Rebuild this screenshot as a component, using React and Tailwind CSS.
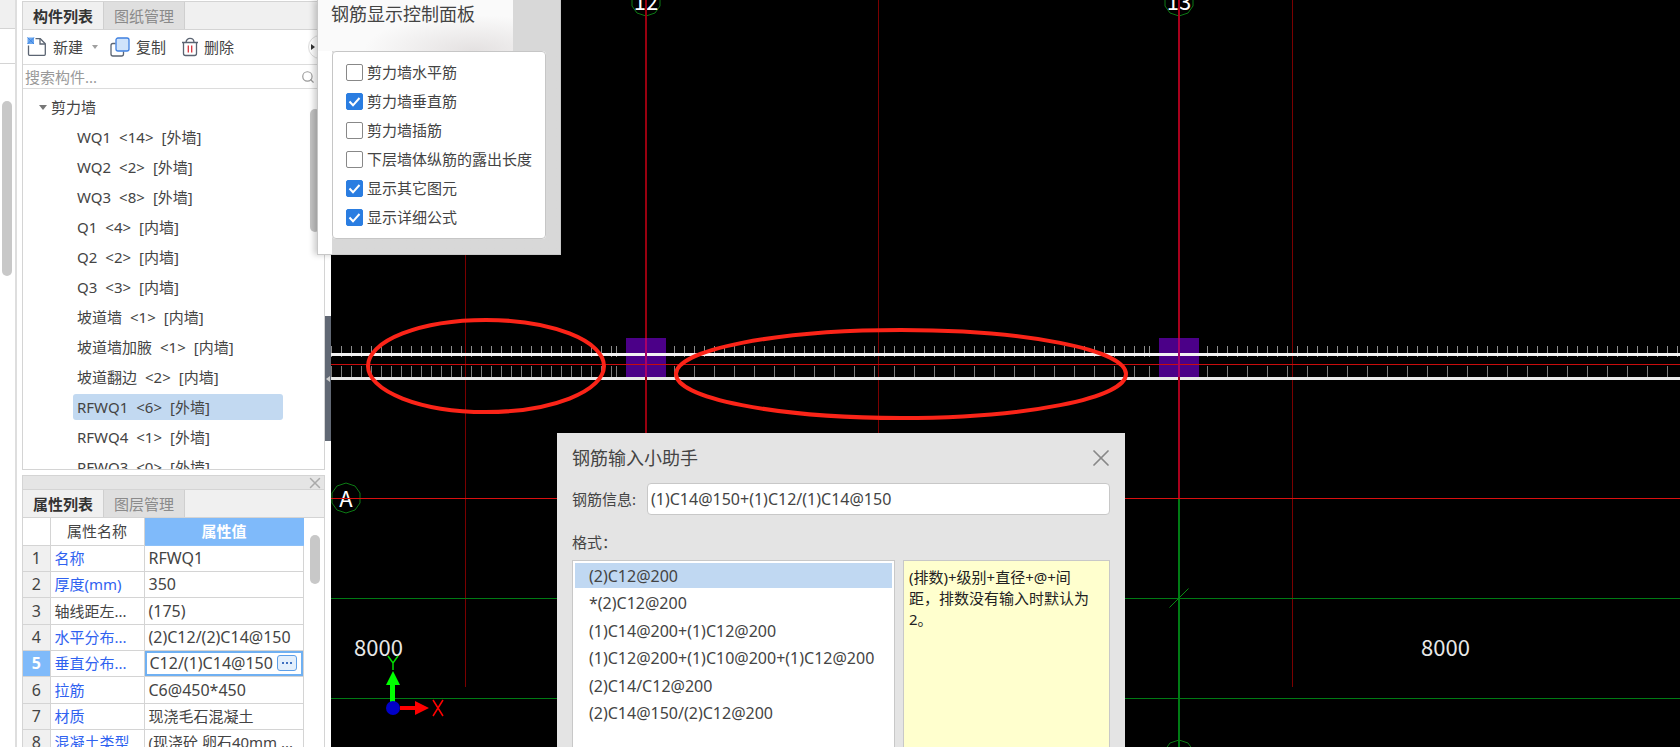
import React, { useState } from 'react';
import { Search, X } from 'lucide-react';

const components = [
  { name: 'WQ1', count: 14, kind: '外墙' },
  { name: 'WQ2', count: 2, kind: '外墙' },
  { name: 'WQ3', count: 8, kind: '外墙' },
  { name: 'Q1', count: 4, kind: '内墙' },
  { name: 'Q2', count: 2, kind: '内墙' },
  { name: 'Q3', count: 3, kind: '内墙' },
  { name: '坡道墙', count: 1, kind: '内墙' },
  { name: '坡道墙加腋', count: 1, kind: '内墙' },
  { name: '坡道翻边', count: 2, kind: '内墙' },
  { name: 'RFWQ1', count: 6, kind: '外墙' },
  { name: 'RFWQ4', count: 1, kind: '外墙' },
  { name: 'RFWQ3', count: 0, kind: '外墙' },
];

const properties = [
  { name: '名称', value: 'RFWQ1', blue: true },
  { name: '厚度(mm)', value: '350', blue: true },
  { name: '轴线距左...', value: '(175)' },
  { name: '水平分布...', value: '(2)C12/(2)C14@150', blue: true },
  { name: '垂直分布...', value: 'C12/(1)C14@150', blue: true, editing: true },
  { name: '拉筋', value: 'C6@450*450', blue: true },
  { name: '材质', value: '现浇毛石混凝土', blue: true, cjk: true },
  { name: '混凝土类型', value: '(现浇砼 卵石40mm ...', blue: true, cjk: true },
];

const displayOptions = [
  { label: '剪力墙水平筋', checked: false },
  { label: '剪力墙垂直筋', checked: true },
  { label: '剪力墙插筋', checked: false },
  { label: '下层墙体纵筋的露出长度', checked: false },
  { label: '显示其它图元', checked: true },
  { label: '显示详细公式', checked: true },
];

const formats = [
  '(2)C12@200',
  '*(2)C12@200',
  '(1)C14@200+(1)C12@200',
  '(1)C12@200+(1)C10@200+(1)C12@200',
  '(2)C14/C12@200',
  '(2)C14@150/(2)C12@200',
];

const range = (start, end, step) => {
  const out = [];
  for (let v = start; v <= end; v += step) out.push(v);
  return out;
};

// rebar marks, in drawing coordinates
const outerBars = [...range(1, 281, 10), 286, ...range(344, 814, 10), 819, ...range(877, 1900, 10)];
const innerBars = [...range(1, 281, 10), 286, ...range(344, 804, 20), 819, ...range(877, 1900, 20)];

const Tabs = ({ active, other }) => (
  <div className="flex h-7 shrink-0 border-b border-[#d4d4d4] bg-[#f0f0f0]" role="tablist">
    <button role="tab" aria-selected="true" className="w-[80px] font-bold text-[#333]">{active}</button>
    <button role="tab" aria-selected="false" className="w-[82px] border-x border-[#cfcfcf] bg-[#dfdfdf] text-[#8a8a8a]">{other}</button>
  </div>
);

const NewIcon = () => (
  <svg width="20" height="20" viewBox="0 0 20 20" fill="none" stroke="#5b6472" strokeWidth="1.3">
    <path d="M8.5 1.7h4.8l5 5v10.6a1 1 0 0 1-1 1H2.5a1 1 0 0 1-1-1V8.5" />
    <path d="M13 2v5h5" />
    <rect x="0.5" y="0.5" width="6.500" height="6.500" fill="#6aa6ee" stroke="none" />
    <path d="M0.500 0.500l6.500 6.500M7 0.500l-6.500 6.500" stroke="#3f86e4" strokeWidth="1" />
  </svg>
);

const CopyIcon = () => (
  <svg width="20" height="20" viewBox="0 0 20 20" fill="none" strokeWidth="1.3">
    <path d="M5.5 6.5H3a2 2 0 0 0-2 2V17a2 2 0 0 0 2 2h8.5a2 2 0 0 0 2-2v-2.5" stroke="#5b6472" />
    <rect x="6" y="1" width="13" height="13" rx="2" fill="#cfe3fb" stroke="#3f80e0" />
  </svg>
);

const DeleteIcon = () => (
  <svg width="18" height="20" viewBox="0 0 18 20" fill="none" stroke="#5b6472" strokeWidth="1.3">
    <path d="M1 5.5h16M5 5.5c0-5.500 8-5.500 8 0M2.500 5.500v11a2 2 0 0 0 2 2h9a2 2 0 0 0 2-2v-11" />
    <path d="M7.300 8.500v7M10.700 8.500v7" stroke="#d8343c" />
  </svg>
);

const ComponentPanel = () => {
  const [selected, setSelected] = useState('RFWQ1');
  return (
    <section className="mt-px flex h-[469px] shrink-0 flex-col overflow-hidden border border-[#d4d4d4] bg-white">
      <Tabs active="构件列表" other="图纸管理" />
      <div className="flex h-[35px] shrink-0 items-center border-b border-[#dcdcdc] pl-1">
        <button className="flex items-center gap-[6px]"><NewIcon />新建</button>
        <span className="mx-[9px] border-x-3 border-t-4 border-x-transparent border-t-[#a0a0a0]" />
        <button className="ml-[3px] flex items-center gap-[6px]"><CopyIcon />复制</button>
        <button className="ml-[15px] flex items-center gap-[5px]"><DeleteIcon />删除</button>
        <button aria-label="更多" className="ml-auto flex h-6 w-4 items-center rounded-l-full border border-[#ddd] pl-[2px]">
          <span className="border-y-3 border-l-4 border-y-transparent border-l-[#333]" />
        </button>
      </div>
      <div className="flex h-6 shrink-0 items-center border-b border-[#dcdcdc] pl-[2px] pr-[9px]">
        <input aria-label="搜索构件" placeholder="搜索构件..." className="min-w-0 flex-1 outline-none placeholder:text-[#999]" />
        <Search className="size-[14px] text-[#999]" />
      </div>
      <div className="flex min-h-0 flex-1">
        <ul className="flex-1 pt-[3px]">
          <li className="flex h-[30px] items-center gap-1 pl-4">
            <span className="border-x-4 border-t-5 border-x-transparent border-t-[#777]" />剪力墙
          </li>
          {components.map((item) => (
            <li key={item.name} className="flex h-[30px] items-center pl-[50px]">
              <button
                onClick={() => setSelected(item.name)}
                className={`flex h-[26px] w-[210px] items-center gap-2 rounded-[3px] px-1 ${item.name === selected ? 'bg-[#c2d9f1]' : ''}`}
              >
                <span>{item.name}</span>
                <span>&lt;{item.count}&gt;</span>
                <span>[{item.kind}]</span>
              </button>
            </li>
          ))}
        </ul>
        <div className="mr-1 mt-5 h-[123px] w-[10px] rounded-full bg-[#c4c4c4]" />
      </div>
    </section>
  );
};

const PropertyPanel = () => (
  <section className="mt-[5px] flex min-h-0 flex-1 flex-col overflow-hidden border-x border-t border-[#d4d4d4] bg-white">
    <div className="flex h-[14px] shrink-0 items-center justify-end border-b border-[#d4d4d4] bg-[#e5e5e5]">
      <button aria-label="关闭属性面板"><X className="size-[18px] text-[#aaa]" /></button>
    </div>
    <Tabs active="属性列表" other="图层管理" />
    <div className="flex">
      <table className="w-[281px] table-fixed border-collapse">
        <thead>
          <tr className="h-[27px]">
            <th className="w-[27px] border-b border-r border-[#d4d4d4]"></th>
            <th className="w-[94px] border-b border-r border-[#d4d4d4] font-normal">属性名称</th>
            <th className="border-b border-[#8cc0f8] bg-[#7fbafa] text-white">属性值</th>
          </tr>
        </thead>
        <tbody>
          {properties.map((p, i) => (
            <tr key={p.name} className="h-[26px] [&:nth-child(3n)]:h-[27px]">
              <th className={`border-b border-r border-[#d4d4d4] text-[16px] ${p.editing ? 'bg-[#7fbafa] font-bold text-white' : 'bg-[#f0f0f0] font-normal'}`}>{i + 1}</th>
              <td className={`overflow-hidden whitespace-nowrap border-b border-r border-[#d4d4d4] pl-1 ${p.blue ? 'text-[#2f62f0]' : ''}`}>{p.name}</td>
              {p.editing ? (
                <td className="border-b border-r border-[#d4d4d4] text-[16px]">
                  <div className="flex h-[25px] items-center border-2 border-[#6fb0f2] pl-[3px] pr-1">
                    <input aria-label={p.name} defaultValue={p.value} className="min-w-0 flex-1 outline-none" />
                    <button aria-label="编辑" className="flex h-4 w-5 items-center justify-center gap-[2px] rounded-[3px] border border-[#5d9fe8] bg-[#e3effc]">
                      <i className="size-[2px] bg-[#3f70c0]" /><i className="size-[2px] bg-[#3f70c0]" /><i className="size-[2px] bg-[#3f70c0]" />
                    </button>
                  </div>
                </td>
              ) : (
                <td className={`overflow-hidden whitespace-nowrap border-b border-r border-[#d4d4d4] pl-1 ${p.cjk ? '' : 'text-[16px]'}`}>{p.value}</td>
              )}
            </tr>
          ))}
        </tbody>
      </table>
      <div className="ml-[6px] mt-[17px] h-[49px] w-[10px] rounded-full bg-[#c8c8c8]" />
    </div>
  </section>
);

const AxisBubble = ({ x, y, label }) => (
  <g>
    <path transform={`translate(${x} ${y})`} d="M0-15L9-12 14-5 14 5 9 12 0 15-9 12-14 5-14-5-9-12Z" fill="none" stroke="#0c7a14" />
    <text x={x} y={y + 9} textAnchor="middle" className="fill-white text-[22px]">{label}</text>
  </g>
);

const Drawing = () => (
  <svg className="absolute inset-0 h-full w-full font-['Noto_Sans_CJK_SC',sans-serif]" fill="none">
    {/* secondary axes */}
    <g fill="#7a0000">
      <rect x="134" y="0" width="1" height="687" />
      <rect x="547" y="0" width="1" height="687" />
      <rect x="961" y="0" width="1" height="687" />
    </g>
    <g fill="#007a14">
      <rect y="598" width="100%" height="1" />
      <rect y="698" width="100%" height="1" />
      <rect x="847" y="498" width="2" height="249" />
    </g>
    <path d="M838.500 607.500L857.500 588.500" stroke="#0a8a14" />
    <AxisBubble x={15} y={498} label="A" />
    <AxisBubble x={315} y={1} label="12" />
    <AxisBubble x={848} y={1} label="13" />
    <AxisBubble x={848} y={755} label="13" />
    <rect y="498" width="100%" height="1" fill="#d81010" />

    {/* columns */}
    <rect x="295" y="338" width="40" height="39" fill="#4b0088" />
    <rect x="828" y="338" width="40" height="39" fill="#4b0088" />

    {/* wall with its vertical bars */}
    {outerBars.map((x) => <rect key={x} x={x - 1} y="346" width="1" height="11" fill="#8c8c8c" />)}
    {innerBars.map((x) => <rect key={x} x={x - 1} y="366" width="1" height="12" fill="#7c7c7c" />)}
    <rect y="353" width="100%" height="3" fill="#f2f2f2" />
    <rect y="377" width="100%" height="3" fill="#e8e8e8" />
    <rect y="364" width="100%" height="1" fill="#c80c0c" />
    <rect x="314" y="0" width="2" height="498" fill="#98000f" />
    <rect x="847" y="0" width="2" height="498" fill="#a8001c" />
    <path d="M315 338v39M848 338v39" stroke="#a8006a" strokeWidth="2" />

    <g stroke="#fb2418" strokeWidth="4">
      <ellipse cx="155" cy="366" rx="118" ry="46" />
      <ellipse cx="570" cy="374" rx="225" ry="44" />
    </g>

    <g className="fill-[#e8e8e8] text-[22px]">
      <text x="23" y="656">8000</text>
      <text x="1090" y="656">8000</text>
    </g>

    {/* origin marker */}
    <rect x="59" y="684" width="5" height="20" fill="#0f0" />
    <path d="M62 671l-7 14h14z" fill="#0f0" />
    <path d="M69 706h15v-5l14 7-14 7v-5H69z" fill="#f00" />
    <circle cx="62" cy="708" r="7" fill="#0000c8" />
    <path d="M57 656l5 7 5-7M62 663v7" stroke="#0d0" strokeWidth="1.500" />
    <path d="M102 700l10 16M112 700l-10 16" stroke="#f00" strokeWidth="1.500" />
  </svg>
);

const DisplayPanel = () => (
  <div className="absolute -left-[14px] top-0 w-[244px] border border-t-0 border-[#c8c8c8] bg-[#d8d8d8] shadow-[-3px_0_6px_rgba(0,0,0,0.2)]">
    <div className="h-[51px] w-[195px] bg-[#fafafa] bg-radial-[at_80%_100%] from-[#e4e1e1] to-[#fafafa] to-50% pl-[13px]">
      <h2 className="whitespace-nowrap text-[18px] leading-[28px]">钢筋显示控制面板</h2>
    </div>
    <div className="bg-linear-to-r from-white from-[14px] to-[#d8d8d8] to-[14px] pb-[15px]">
      <fieldset className="ml-[14px] flex h-[188px] w-[214px] flex-col justify-between rounded-[4px] border border-[#c6c6c6] bg-white pt-[10px] pb-[11px] pl-[13px]">
        {displayOptions.map((o) => (
          <label key={o.label} className="flex h-5 items-center gap-1 whitespace-nowrap">
            <span className="relative flex size-[17px]">
              <input
                type="checkbox"
                defaultChecked={o.checked}
                className="peer size-[17px] appearance-none rounded-[2px] border border-[#888] bg-white checked:border-[#2a7de1] checked:bg-[#2a7de1]"
              />
              <svg className="pointer-events-none absolute inset-0 hidden peer-checked:block" width="17" height="17" fill="none" stroke="#fff" strokeWidth="2">
                <path d="M3.500 8.500l3.500 3.800L13.500 5" />
              </svg>
            </span>
            {o.label}
          </label>
        ))}
      </fieldset>
    </div>
  </div>
);

const RebarHelper = () => {
  const [active, setActive] = useState(0);
  return (
    <div role="dialog" aria-label="钢筋输入小助手" className="absolute left-[226px] top-[433px] flex w-[568px] flex-col bg-[#e4e4e4] px-[15px] pt-[10px]">
      <div className="-mr-[5px] flex h-[30px] items-center justify-between">
        <h2 className="text-[18px]">钢筋输入小助手</h2>
        <button aria-label="关闭"><X className="size-7 text-[#888]" strokeWidth={1.5} /></button>
      </div>
      <div className="mt-[10px] flex items-center justify-between">
        <label htmlFor="rebar">钢筋信息:</label>
        <input id="rebar" defaultValue="(1)C14@150+(1)C12/(1)C14@150" className="h-8 w-[463px] rounded-[4px] border border-[#c8c8c8] bg-white px-[3px] text-[16px] outline-none" />
      </div>
      <div className="mt-[15px] h-[30px] leading-[24px]">格式：</div>
      <div className="flex h-[220px] gap-2">
        <div className="w-[323px] border border-[#c8c8c8] bg-white p-[2px]">
          <ul className="flex h-[163px] flex-col justify-between">
            {formats.map((f, i) => (
              <li key={f}>
                <button
                  onClick={() => setActive(i)}
                  className={`block h-[25px] w-full whitespace-nowrap pl-[14px] text-left text-[16px] ${i === active ? 'bg-[#c0d8f2]' : ''}`}
                >
                  {f}
                </button>
              </li>
            ))}
          </ul>
        </div>
        <p className="flex-1 border border-[#c8c8c8] bg-[#ffffce] pt-[6px] pr-4 pl-[5px] leading-[21px] text-[#222]">
          (排数)+级别+直径+@+间距，排数没有输入时默认为2。
        </p>
      </div>
    </div>
  );
};

export default function App() {
  return (
    <div className="flex h-screen overflow-hidden bg-white font-['Noto_Sans','Noto_Sans_CJK_SC',sans-serif] text-[15px] leading-[22px] text-[#444]">
      {/* Left edge of the module tree */}
      <div className="flex w-[17px] shrink-0 flex-col border-r-2 border-[#dedede]">
        <div className="h-[29px] border-b border-[#d4d4d4] bg-[#f0f0f0]" />
        <div className="h-[35px] border-b border-[#d4d4d4]" />
        <div className="ml-[2px] mt-[37px] h-[175px] w-[10px] rounded-full bg-[#c8c8c8]" />
      </div>

      <aside className="ml-[5px] flex w-[303px] shrink-0 flex-col">
        <ComponentPanel />
        <PropertyPanel />
      </aside>

      <div className="flex w-[6px] shrink-0 flex-col">
        <button aria-label="收起面板" className="mt-[316px] flex h-[125px] items-center justify-center bg-[#616874]">
          <span className="border-y-3 border-r-4 border-y-transparent border-r-[#ccc]" />
        </button>
      </div>

      <main className="relative min-w-0 flex-1 bg-black">
        <Drawing />
        <DisplayPanel />
        <RebarHelper />
      </main>
    </div>
  );
}
